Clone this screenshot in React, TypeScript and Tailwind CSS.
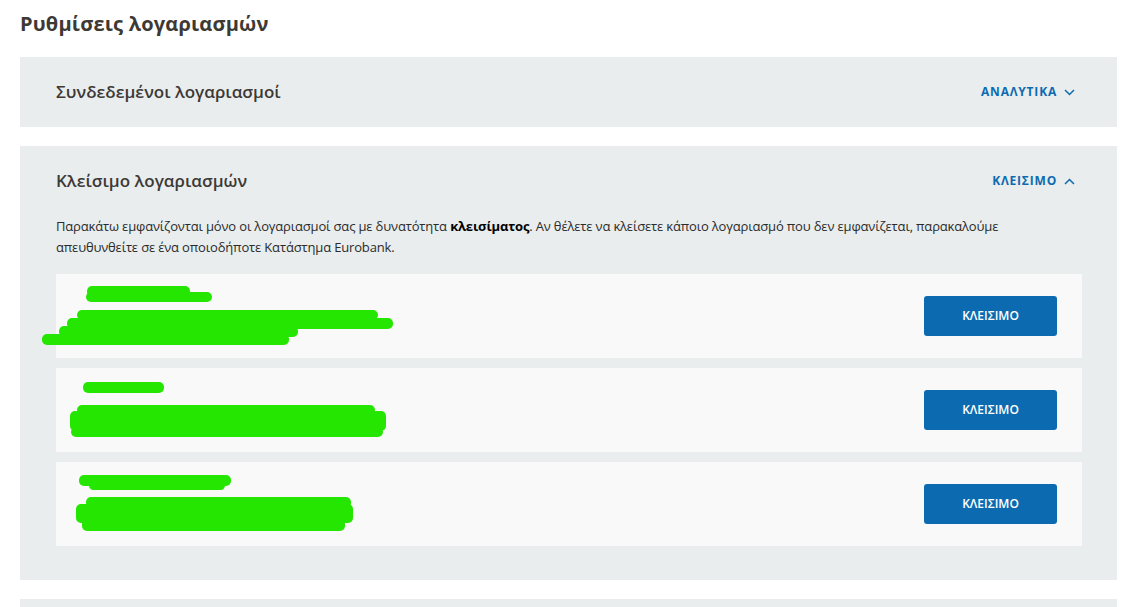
import React from "react";

type Shape = { x1: number; x2: number; y1: number; y2: number };

const GREEN = "#25e600";

function Scribble({ top, left, shapes }: { top: number; left: number; shapes: Shape[] }) {
  return (
    <svg
      className="absolute pointer-events-none"
      style={{ top: 0, left: 0, overflow: "visible" }}
      width={1}
      height={1}
    >
      {shapes.map((s, i) => {
        const h = s.y2 - s.y1;
        return (
          <rect
            key={i}
            x={s.x1 - left}
            y={s.y1 - top}
            width={s.x2 - s.x1}
            height={h}
            rx={Math.min(h / 2, 5)}
            fill={GREEN}
          />
        );
      })}
    </svg>
  );
}

const rows: { top: number; shapes: Shape[] }[] = [
  {
    top: 274,
    shapes: [
      { x1: 87, x2: 190, y1: 286, y2: 297 },
      { x1: 86, x2: 212, y1: 292, y2: 302 },
      { x1: 77, x2: 378, y1: 310, y2: 320 },
      { x1: 67, x2: 393, y1: 318, y2: 329 },
      { x1: 59, x2: 298, y1: 326, y2: 337 },
      { x1: 42, x2: 289, y1: 334, y2: 345 },
    ],
  },
  {
    top: 368,
    shapes: [
      { x1: 83, x2: 164, y1: 382, y2: 393 },
      { x1: 77, x2: 375, y1: 405, y2: 415 },
      { x1: 70, x2: 386, y1: 411, y2: 431 },
      { x1: 71, x2: 383, y1: 427, y2: 437 },
    ],
  },
  {
    top: 462,
    shapes: [
      { x1: 79, x2: 231, y1: 475, y2: 486 },
      { x1: 89, x2: 225, y1: 481, y2: 490 },
      { x1: 86, x2: 351, y1: 497, y2: 508 },
      { x1: 76, x2: 353, y1: 504, y2: 523 },
      { x1: 82, x2: 345, y1: 519, y2: 531 },
    ],
  },
];

function Chevron({ up }: { up?: boolean }) {
  return (
    <svg width="11" height="7" viewBox="0 0 11 7" className="ml-[7px]">
      <path
        d={up ? "M1 6 L5.5 1.5 L10 6" : "M1 1 L5.5 5.5 L10 1"}
        fill="none"
        stroke="#0c6bb0"
        strokeWidth="1.5"
      />
    </svg>
  );
}

export default function App() {
  return (
    <div
      className="w-[1125px] h-[607px] overflow-hidden bg-white pl-5 pr-2 pt-[9px]"
      style={{ fontFamily: '"Open Sans", "Noto Sans", sans-serif' }}
    >
      <h1 className="text-[20px] leading-[30px] font-bold text-[#3d3935] tracking-[0.2px]">
        Ρυθμίσεις λογαριασμών
      </h1>

      <div className="mt-[18px] bg-[#e9edee] h-[70px] flex items-center justify-between pl-9 pr-[42px]">
        <div className="text-[17px] font-semibold text-[#3d3935]">Συνδεδεμένοι λογαριασμοί</div>
        <div className="flex items-center text-[12px] font-bold text-[#0c6bb0] tracking-[0.8px]">
          ΑΝΑΛΥΤΙΚΑ
          <Chevron />
        </div>
      </div>

      <div className="mt-[19px] bg-[#e9edee] pl-9 pr-[35px] pb-[34px]">
        <div className="h-[70px] flex items-center justify-between pr-[7px]">
          <div className="text-[17px] font-semibold text-[#3d3935]">Κλείσιμο λογαριασμών</div>
          <div className="flex items-center text-[12px] font-bold text-[#0c6bb0] tracking-[0.8px]">
            ΚΛΕΙΣΙΜΟ
            <Chevron up />
          </div>
        </div>
        <div className="text-[13px] leading-[21px] text-[#2b2b2b] tracking-[-0.16px] whitespace-nowrap">
          <div>
            Παρακάτω εμφανίζονται μόνο οι λογαριασμοί σας με δυνατότητα{" "}
            <b className="font-bold text-black">κλεισίματος</b>. Αν θέλετε να κλείσετε κάποιο
            λογαριασμό που δεν εμφανίζεται, παρακαλούμε
          </div>
          <div>απευθυνθείτε σε ένα οποιοδήποτε Κατάστημα Eurobank.</div>
        </div>
        <div className="mt-4 flex flex-col gap-[10px]">
          {rows.map((r, i) => (
            <div
              key={i}
              className="relative h-[84px] bg-[#f9f9f9] flex items-center justify-end pr-[25px]"
            >
              <Scribble top={r.top} left={56} shapes={r.shapes} />
              <button className="w-[133px] h-[40px] rounded-[3px] bg-[#0c6bb0] text-white text-[12px] font-semibold">
                ΚΛΕΙΣΙΜΟ
              </button>
            </div>
          ))}
        </div>
      </div>

      <div className="mt-[19px] bg-[#e9edee] h-[70px]" />
    </div>
  );
}
